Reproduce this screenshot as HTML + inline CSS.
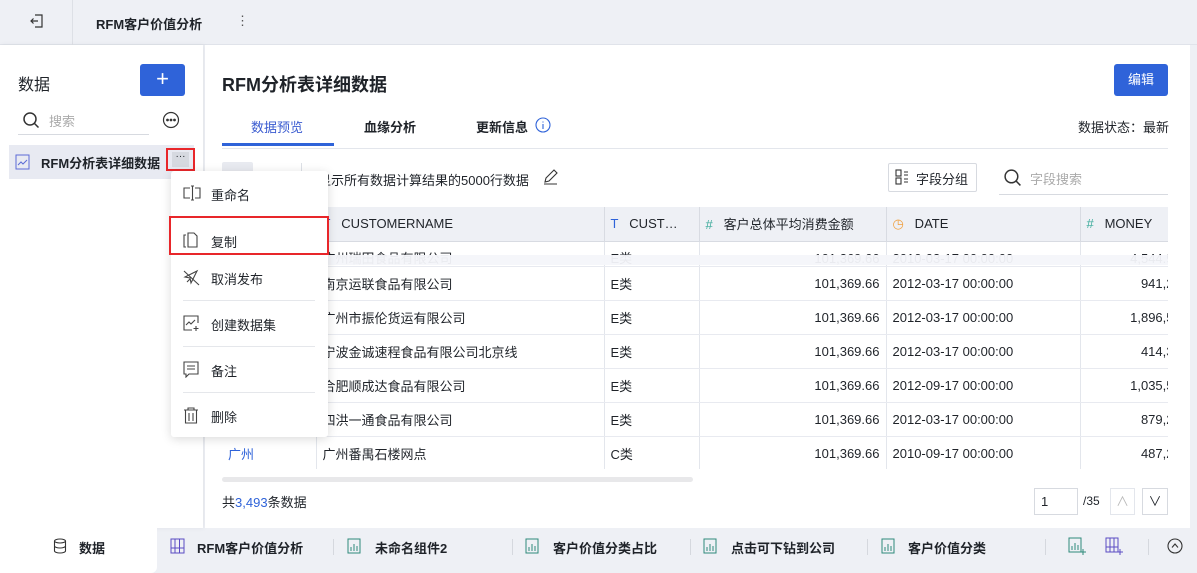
<!DOCTYPE html>
<html><head><meta charset="utf-8"><style>
*{box-sizing:border-box;margin:0;padding:0}
body{width:1197px;height:573px;overflow:hidden;background:#eef0f5;font-family:"Liberation Sans","Noto Sans CJK SC",sans-serif;font-size:13px;color:#1f2329;position:relative}
.abs{position:absolute}
.top{left:0;top:0;width:1197px;height:45px;background:#eef0f5;border-bottom:1px solid #e0e3ea}
.left{left:0;top:45px;width:203px;height:483px;background:#fff;box-shadow:1px 0 5px rgba(0,0,0,.06)}
.main{left:205px;top:45px;width:985px;height:483px;background:#fff}
.t{white-space:nowrap}
table{border-collapse:collapse;position:absolute;left:0;top:0;table-layout:fixed;width:958px}
td,th{border-right:1px solid #e3e6ec;border-bottom:1px solid #e8eaf0;padding:0 6px;white-space:nowrap;overflow:hidden;font-weight:normal;font-size:13px}
tr{height:34px}
th{background:#eef0f5;text-align:left;border-right:1px solid #d8dbe2;border-bottom:1px solid #d8dbe2;color:#1f2329}
td.n{text-align:right}
.menu{left:171px;top:171px;width:157px;height:266px;background:#fff;box-shadow:0 2px 10px rgba(0,0,0,.15);border-radius:3px}
.mi{position:absolute;left:40px;font-size:13px}
.sep{position:absolute;left:12px;width:132px;height:1px;background:#e5e7eb}
.ic{position:absolute;left:12px}
.bt{position:absolute;top:538px;font-size:13px;font-weight:bold;white-space:nowrap}
.bsep{position:absolute;top:539px;width:1px;height:16px;background:#d5d8de}
</style></head><body>
<div class="abs top"></div>
<div class="abs" style="left:72px;top:0;width:1px;height:45px;background:#dde0e6"></div>
<svg class="abs" style="left:29px;top:13px" width="16" height="16" viewBox="0 0 16 16" fill="none" stroke="#333" stroke-width="1.2"><path d="M6 2h7v12H6M9 8H2M4.5 5.5L2 8l2.5 2.5"/></svg>
<div class="abs t" style="left:96px;top:14px;font-weight:bold;font-size:13px">RFM客户价值分析</div>
<div class="abs t" style="left:236px;top:13px;font-size:13px;color:#555">⋮</div>

<div class="abs left"></div>
<div class="abs main"></div>
<div class="abs" style="left:1190px;top:45px;width:7px;height:483px;background:#eef0f5"></div>

<div class="abs t" style="left:18px;top:71px;font-size:16px">数据</div>
<div class="abs" style="left:140px;top:64px;width:45px;height:32px;background:#2f63d9;border-radius:3px;color:#fff;font-size:22px;text-align:center;line-height:30px">+</div>
<svg class="abs" style="left:22px;top:111px" width="18" height="18" viewBox="0 0 18 18" fill="none" stroke="#333" stroke-width="1.5"><circle cx="8" cy="8" r="6"/><path d="M12.5 12.5l4 4"/></svg>
<div class="abs t" style="left:49px;top:111px;color:#aaa">搜索</div>
<div class="abs" style="left:18px;top:134px;width:131px;height:1px;background:#d7dae0"></div>
<svg class="abs" style="left:162px;top:111px" width="18" height="18" viewBox="0 0 18 18" fill="none" stroke="#333" stroke-width="1.2"><circle cx="9" cy="9" r="7.5"/><circle cx="5.5" cy="9" r=".8" fill="#333"/><circle cx="9" cy="9" r=".8" fill="#333"/><circle cx="12.5" cy="9" r=".8" fill="#333"/></svg>
<div class="abs" style="left:9px;top:145px;width:185px;height:34px;background:#e8eaf2"></div>
<svg class="abs" style="left:15px;top:154px" width="15" height="16" viewBox="0 0 15 16" fill="none" stroke="#5b6bd6" stroke-width="1"><rect x="1" y="1" width="13" height="14"/><path d="M3 11l3-3 2 2 4-4"/></svg>
<div class="abs t" style="left:41px;top:153px;font-weight:bold">RFM分析表详细数据</div>
<div class="abs" style="left:166px;top:148px;width:29px;height:23px;border:2px solid #e8262a"></div>
<div class="abs" style="left:172px;top:152px;width:17px;height:15px;background:#d6d9e0;text-align:center;font-size:10px;line-height:10px">···</div>

<div class="abs t" style="left:222px;top:71px;font-size:18px;font-weight:bold">RFM分析表详细数据</div>
<div class="abs" style="left:1114px;top:64px;width:54px;height:32px;background:#2f63d9;border-radius:3px;color:#fff;text-align:center;line-height:32px">编辑</div>
<div class="abs t" style="left:251px;top:117px;color:#3a5bd0">数据预览</div>
<div class="abs" style="left:222px;top:143px;width:112px;height:3px;background:#2f63d9"></div>
<div class="abs t" style="left:364px;top:117px;font-weight:bold">血缘分析</div>
<div class="abs t" style="left:476px;top:117px;font-weight:bold">更新信息</div>
<svg class="abs" style="left:535px;top:117px" width="16" height="16" viewBox="0 0 16 16" fill="none" stroke="#2f63d9" stroke-width="1.1"><circle cx="8" cy="8" r="7"/><path d="M8 7v5M8 4.5v1"/></svg>
<div class="abs t" style="left:1078px;top:117px">数据状态：最新</div>
<div class="abs" style="left:222px;top:148px;width:946px;height:1px;background:#e3e6ec"></div>

<div class="abs" style="left:222px;top:162px;width:31px;height:26px;background:#e8eaf0;border-radius:2px"></div>
<div class="abs" style="left:301px;top:163px;width:1px;height:24px;background:#dde0e6"></div>
<div class="abs t" style="left:318px;top:170px">显示所有数据计算结果的5000行数据</div>
<svg class="abs" style="left:542px;top:168px" width="17" height="17" viewBox="0 0 17 17" fill="none" stroke="#333" stroke-width="1.1"><path d="M3 14l1-4 8-8 3 3-8 8zM2 16h13"/></svg>
<div class="abs" style="left:888px;top:163px;width:89px;height:29px;border:1px solid #d7dae0;border-radius:2px"></div>
<svg class="abs" style="left:895px;top:169px" width="16" height="16" viewBox="0 0 16 16" fill="none" stroke="#333" stroke-width="1.1"><rect x="1" y="1" width="5" height="6"/><rect x="1" y="9" width="5" height="6"/><path d="M9 3h4M9 6h4M9 10h4M9 13h4"/></svg>
<div class="abs t" style="left:916px;top:169px">字段分组</div>
<svg class="abs" style="left:1003px;top:168px" width="19" height="19" viewBox="0 0 18 18" fill="none" stroke="#333" stroke-width="1.4"><circle cx="8" cy="8" r="6"/><path d="M12.5 12.5l4 4"/></svg>
<div class="abs t" style="left:1030px;top:169px;color:#aaa">字段搜索</div>
<div class="abs" style="left:999px;top:194px;width:169px;height:1px;background:#d7dae0"></div>

<div class="abs" style="left:222px;top:207px;width:946px;height:262px;overflow:hidden">
<table>
<colgroup><col style="width:94px"><col style="width:288px"><col style="width:95px"><col style="width:187px"><col style="width:194px"><col style="width:100px"></colgroup>
<tr style="height:34px"><th><span></span></th><th><span style="color:#2f63d9">T</span>&nbsp;&nbsp;&nbsp;CUSTOMERNAME</th><th><span style="color:#2f63d9">T</span>&nbsp;&nbsp;&nbsp;CUST…</th><th><span style="color:#3aaa9a">#</span>&nbsp;&nbsp;&nbsp;客户总体平均消费金额</th><th><span style="color:#f0a040">◷</span>&nbsp;&nbsp;&nbsp;DATE</th><th><span style="color:#3aaa9a">#</span>&nbsp;&nbsp;&nbsp;MONEY</th></tr>
<tr style="height:25px"><td></td><td style="vertical-align:bottom;line-height:14px">广州瑞田食品有限公司</td><td style="vertical-align:bottom;line-height:14px">E类</td><td class="n" style="vertical-align:bottom;line-height:14px">101,369.66</td><td style="vertical-align:bottom;line-height:14px">2010-03-17 00:00:00</td><td class="n" style="vertical-align:bottom;line-height:14px">4,544.9</td></tr>
<tr><td></td><td>南京运联食品有限公司</td><td>E类</td><td class="n">101,369.66</td><td>2012-03-17 00:00:00</td><td class="n">941,2</td></tr>
<tr><td></td><td>广州市振伦货运有限公司</td><td>E类</td><td class="n">101,369.66</td><td>2012-03-17 00:00:00</td><td class="n">1,896,5</td></tr>
<tr><td></td><td>宁波金诚速程食品有限公司北京线</td><td>E类</td><td class="n">101,369.66</td><td>2012-03-17 00:00:00</td><td class="n">414,3</td></tr>
<tr><td></td><td>合肥顺成达食品有限公司</td><td>E类</td><td class="n">101,369.66</td><td>2012-09-17 00:00:00</td><td class="n">1,035,5</td></tr>
<tr><td></td><td>四洪一通食品有限公司</td><td>E类</td><td class="n">101,369.66</td><td>2012-03-17 00:00:00</td><td class="n">879,2</td></tr>
<tr><td style="color:#2f63d9">广州</td><td>广州番禺石楼网点</td><td>C类</td><td class="n">101,369.66</td><td>2010-09-17 00:00:00</td><td class="n">487,2</td></tr>
<tr><td></td><td></td><td></td><td></td><td></td><td></td></tr>
</table>
<div class="abs" style="left:0;top:48px;width:946px;height:10px;background:rgba(244,246,250,.95)"></div>
</div>
<div class="abs" style="left:222px;top:477px;width:471px;height:5px;background:#e8e8ea;border-radius:3px"></div>
<div class="abs t" style="left:222px;top:492px">共<span style="color:#2f63d9">3,493</span>条数据</div>
<div class="abs" style="left:1034px;top:488px;width:44px;height:27px;border:1px solid #d7dae0;padding:5px 6px">1</div>
<div class="abs t" style="left:1083px;top:494px;font-size:12px">/35</div>
<div class="abs" style="left:1110px;top:488px;width:25px;height:27px;border:1px solid #e3e6ec;color:#bbb;text-align:center;line-height:26px">∧</div>
<div class="abs" style="left:1142px;top:488px;width:26px;height:27px;border:1px solid #d7dae0;text-align:center;line-height:26px">∨</div>

<div class="abs menu">
<svg class="ic" style="top:14px" width="18" height="16" viewBox="0 0 18 16" fill="none" stroke="#444" stroke-width="1.1"><path d="M7 3H1v10h6M12 3h5v10h-5M9.5 1v14M8 1h3M8 15h3"/></svg>
<div class="mi" style="top:14px">重命名</div>
<svg class="ic" style="top:61px" width="16" height="16" viewBox="0 0 16 16" fill="none" stroke="#444" stroke-width="1.1"><path d="M3 3H1v12h2M5 1h6l3 3v11H5z"/></svg>
<div class="mi" style="top:61px">复制</div>
<svg class="ic" style="top:98px" width="17" height="17" viewBox="0 0 17 17" fill="none" stroke="#444" stroke-width="1.1"><path d="M2 8l6-3 6-3-3 6-3 6-1-5zM4 13l3-3M1 2l15 14"/></svg>
<div class="mi" style="top:98px">取消发布</div>
<div class="sep" style="top:129px"></div>
<svg class="ic" style="top:144px" width="17" height="17" viewBox="0 0 17 17" fill="none" stroke="#444" stroke-width="1.1"><path d="M9 15H1V1h14v7M3 10l3-3 2 2 4-4M13 11v5M10.5 13.5h5"/></svg>
<div class="mi" style="top:144px">创建数据集</div>
<div class="sep" style="top:175px"></div>
<svg class="ic" style="top:190px" width="16" height="17" viewBox="0 0 16 17" fill="none" stroke="#444" stroke-width="1.1"><path d="M1 1h14v12H6l-3 3v-3H1zM4 5h8M4 8h8"/></svg>
<div class="mi" style="top:190px">备注</div>
<div class="sep" style="top:221px"></div>
<svg class="ic" style="top:236px" width="16" height="17" viewBox="0 0 16 17" fill="none" stroke="#444" stroke-width="1.1"><path d="M1 3h14M5 3V1h6v2M2.5 3v13h11V3M6 6v8M10 6v8"/></svg>
<div class="mi" style="top:236px">删除</div>
</div>
<div class="abs" style="left:169px;top:216px;width:160px;height:39px;border:2px solid #e8262a"></div>

<div class="abs" style="left:0;top:528px;width:157px;height:45px;background:#fff;border-radius:0 0 6px 0"></div>
<svg class="abs" style="left:53px;top:538px" width="14" height="16" viewBox="0 0 14 16" fill="none" stroke="#333" stroke-width="1.1"><ellipse cx="7" cy="3" rx="5.5" ry="2"/><path d="M1.5 3v10c0 1 2.5 2 5.5 2s5.5-1 5.5-2V3M1.5 8c0 1 2.5 2 5.5 2s5.5-1 5.5-2"/></svg>
<div class="bt" style="left:79px">数据</div>
<svg class="abs" style="left:170px;top:538px" width="15" height="16" viewBox="0 0 15 16" fill="none" stroke="#5b4cc4" stroke-width="1"><rect x="1" y="1" width="13" height="14"/><path d="M1 10h13M5 1v14M9.5 1v14"/></svg>
<div class="bt" style="left:197px">RFM客户价值分析</div>
<div class="bsep" style="left:333px"></div>
<div class="bsep" style="left:512px"></div>
<div class="bsep" style="left:690px"></div>
<div class="bsep" style="left:867px"></div>
<div class="bsep" style="left:1045px"></div>
<div class="bsep" style="left:1148px"></div>
<svg class="abs" style="left:347px;top:538px" width="14" height="16" viewBox="0 0 14 16" fill="none" stroke="#2f8a7a" stroke-width="1"><rect x="1" y="1" width="12" height="14"/><path d="M4 13V9M7 13V6M10 13V8"/></svg>
<div class="bt" style="left:375px">未命名组件2</div>
<svg class="abs" style="left:525px;top:538px" width="14" height="16" viewBox="0 0 14 16" fill="none" stroke="#2f8a7a" stroke-width="1"><rect x="1" y="1" width="12" height="14"/><path d="M4 13V9M7 13V6M10 13V8"/></svg>
<div class="bt" style="left:553px">客户价值分类占比</div>
<svg class="abs" style="left:703px;top:538px" width="14" height="16" viewBox="0 0 14 16" fill="none" stroke="#2f8a7a" stroke-width="1"><rect x="1" y="1" width="12" height="14"/><path d="M4 13V9M7 13V6M10 13V8"/></svg>
<div class="bt" style="left:731px">点击可下钻到公司</div>
<svg class="abs" style="left:881px;top:538px" width="14" height="16" viewBox="0 0 14 16" fill="none" stroke="#2f8a7a" stroke-width="1"><rect x="1" y="1" width="12" height="14"/><path d="M4 13V9M7 13V6M10 13V8"/></svg>
<div class="bt" style="left:908px">客户价值分类</div>
<svg class="abs" style="left:1068px;top:537px" width="18" height="18" viewBox="0 0 18 18" fill="none" stroke="#2f8a7a" stroke-width="1"><rect x="1" y="1" width="12" height="14"/><path d="M4 13V9M7 13V6M10 13V8M15 12v6M12 15h6"/></svg>
<svg class="abs" style="left:1105px;top:537px" width="18" height="18" viewBox="0 0 18 18" fill="none" stroke="#5b4cc4" stroke-width="1"><rect x="1" y="1" width="12" height="14"/><path d="M1 10h12M5 1v14M9 1v14M15 12v6M12 15h6"/></svg>
<svg class="abs" style="left:1167px;top:538px" width="16" height="16" viewBox="0 0 16 16" fill="none" stroke="#333" stroke-width="1.1"><circle cx="8" cy="8" r="7"/><path d="M5 9.5L8 6l3 3.5"/></svg>
</body></html>
